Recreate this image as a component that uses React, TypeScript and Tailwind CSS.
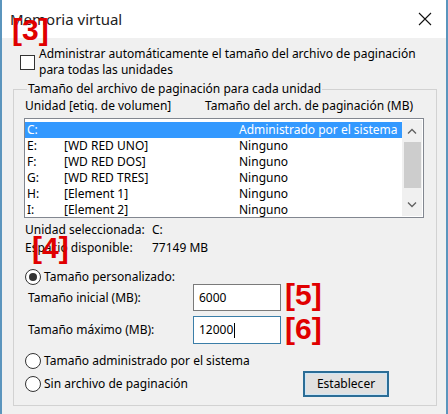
import React from 'react';

const drives = [
  { letter: 'C:', label: '', size: 'Administrado por el sistema', selected: true },
  { letter: 'E:', label: '[WD RED UNO]', size: 'Ninguno' },
  { letter: 'F:', label: '[WD RED DOS]', size: 'Ninguno' },
  { letter: 'G:', label: '[WD RED TRES]', size: 'Ninguno' },
  { letter: 'H:', label: '[Element 1]', size: 'Ninguno' },
  { letter: 'I:', label: '[Element 2]', size: 'Ninguno' },
];

const Radio = ({ checked, label }: { checked?: boolean; label: string }) => (
  <div className="flex items-center h-[16px]">
    <span className="w-[16px] h-[16px] rounded-full border border-[#333] bg-white flex items-center justify-center">
      {checked && <span className="w-[8px] h-[8px] rounded-full bg-[#333]" />}
    </span>
    <span className="ml-[3px] leading-[16px]">{label}</span>
  </div>
);

const Mark = ({ text, className }: { text: string; className: string }) => (
  <span
    className={`absolute font-['Liberation_Sans',sans-serif] font-bold text-[30px] leading-none text-[#e00000] ${className}`}
  >
    {text}
  </span>
);

export default function App() {
  return (
    <div className="relative w-[448px] h-[414px] overflow-hidden bg-[#f0f0f0] border-x-[2px] border-[#5b95bd] font-['Noto_Sans',sans-serif] text-[12px] text-black">
      {/* title bar */}
      <div className="h-[38px] bg-white flex items-center justify-between pl-[8px] pr-[12px]">
        <span className="text-[15px] text-[#222]">Memoria virtual</span>
        <svg width="14" height="14" viewBox="0 0 14 14" className="mr-[2px]">
          <path d="M1 1L13 13M13 1L1 13" stroke="#111" strokeWidth="1.1" />
        </svg>
      </div>

      <div className="pt-[8px] pl-[18px] pr-[9px]">
        <div className="flex items-center">
          <span className="w-[15px] h-[15px] border border-[#333] bg-white shrink-0" />
          <div className="ml-[4px] leading-[16px]">
            <div>Administrar automáticamente el tamaño del archivo de paginación</div>
            <div>para todas las unidades</div>
          </div>
        </div>

        <fieldset className="-ml-[7px] mt-[3px] border border-[#d2d2d2] h-[325px] px-[11px]">
          <legend className="ml-[2px] px-[1px] leading-[16px]">Tamaño del archivo de paginación para cada unidad</legend>

          <div className="flex leading-[16px] pt-[1px]">
            <span className="w-[180px]">Unidad [etiq. de volumen]</span>
            <span>Tamaño del arch. de paginación (MB)</span>
          </div>

          <div className="mt-[4px] ml-[-1px] w-[400px] h-[100px] border border-[#828790] bg-white flex">
            <div className="flex-1 pt-[3px]">
              {drives.map((d) => (
                <div
                  key={d.letter}
                  className={`flex h-[16px] leading-[16px] ${d.selected ? 'bg-[#3399ff] text-white' : ''}`}
                >
                  <span className="w-[39px] pl-[2px]">{d.letter}</span>
                  <span className="w-[175px]">{d.label}</span>
                  <span>{d.size}</span>
                </div>
              ))}
            </div>
            <div className="w-[20px] flex flex-col items-center bg-[#f0f0f0] my-[1px] mr-[1px]">
              <div className="h-[22px] flex items-center justify-center">
                <svg width="10" height="6" viewBox="0 0 10 6">
                  <path d="M1 5.5L5 1.5L9 5.5" stroke="#606060" strokeWidth="1.3" fill="none" />
                </svg>
              </div>
              <div className="w-[17px] h-[46px] bg-[#cdcdcd]" />
              <div className="flex-1" />
              <div className="h-[22px] flex items-center justify-center">
                <svg width="10" height="6" viewBox="0 0 10 6">
                  <path d="M1 0.5L5 4.5L9 0.5" stroke="#606060" strokeWidth="1.3" fill="none" />
                </svg>
              </div>
            </div>
          </div>

          <div className="mt-[3px] leading-[18px]">
            <div className="flex">
              <span className="w-[127px]">Unidad seleccionada:</span>
              <span>C:</span>
            </div>
            <div className="flex">
              <span className="w-[127px]">Espacio disponible:</span>
              <span>77149 MB</span>
            </div>
          </div>

          <div className="mt-[12px]">
            <Radio checked label="Tamaño personalizado:" />
          </div>

          <div className="-mt-[1px] flex items-center ml-[3px]">
            <span className="w-[165px]">Tamaño inicial (MB):</span>
            <div className="w-[88px] h-[27px] border border-[#7a7a7a] bg-white flex items-center pl-[5px]">6000</div>
          </div>
          <div className="mt-[5px] flex items-center ml-[3px]">
            <span className="w-[165px]">Tamaño máximo (MB):</span>
            <div className="w-[88px] h-[28px] border border-[#3b7ea8] bg-white flex items-center pl-[5px]">
              12000<span className="w-px h-[15px] bg-black ml-px" />
            </div>
          </div>

          <div className="mt-[9px]">
            <Radio label="Tamaño administrado por el sistema" />
          </div>
          <div className="mt-[2px] h-[26px] flex items-center">
            <Radio label="Sin archivo de paginación" />
            <button className="ml-auto mr-[36px] w-[86px] h-[26px] border-[2px] border-[#2b6d96] bg-[#e1e1e1] shadow-[inset_0_0_0_1px_#cde6f7]">
              Establecer
            </button>
          </div>
        </fieldset>
      </div>

      <Mark text="[3]" className="left-[10px] top-[15px]" />
      <Mark text="[4]" className="left-[30px] top-[233px]" />
      <Mark text="[5]" className="left-[283px] top-[280px]" />
      <Mark text="[6]" className="left-[283px] top-[314px]" />
    </div>
  );
}
